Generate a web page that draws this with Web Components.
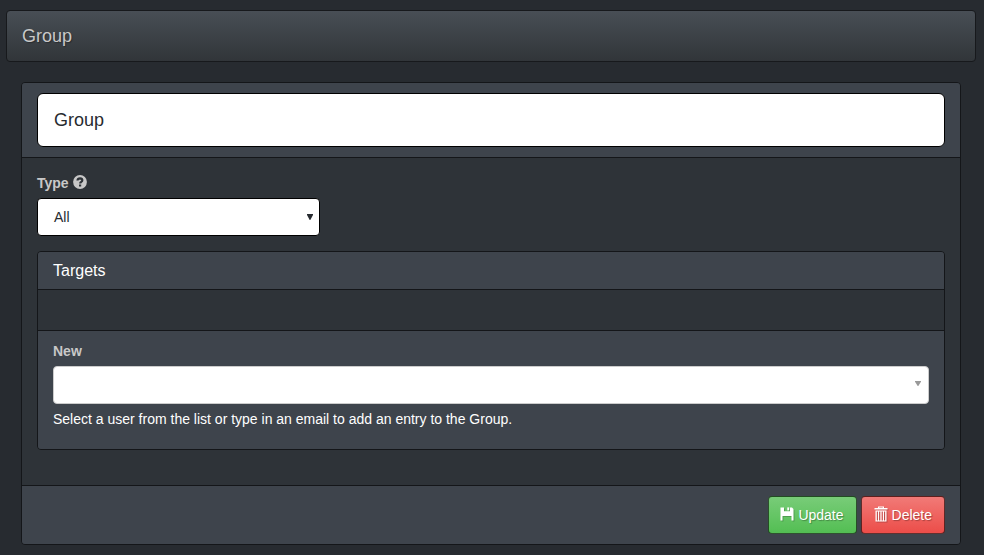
<!DOCTYPE html>
<html lang="en">
<head>
<meta charset="utf-8">
<title>Group</title>
<style>
html, body { margin: 0; height: 100%; }
body { background: #272b30; color: #c8c8c8; font: 14px/20px "Liberation Sans", Arial, sans-serif; overflow: hidden; }
</style>
</head>
<body>
<group-page></group-page>
<script>
const define = (name, html) => {
  const template = document.createElement('template');
  template.innerHTML = html;
  customElements.define(name, class extends HTMLElement {
    constructor() {
      super();
      this.attachShadow({ mode: 'open' }).append(template.content.cloneNode(true));
    }
  });
};

define('title-bar', `
<style>
:host { display: flex; align-items: center; box-sizing: border-box; height: 52px; padding: 0 15px;
  border: 1px solid #17191c; border-radius: 4px;
  background: linear-gradient(#484e55, #3a3f44 60%, #313539);
  font-size: 18px; text-shadow: 1px 1px 1px rgba(0,0,0,.3); }
</style><slot></slot>`);

define('panel-box', `
<style>
:host { display: flex; flex-direction: column; box-sizing: border-box; border: 1px solid #141619;
  border-radius: 4px; background: #2e3338; overflow: hidden; }
header, footer { background: #3e444c; padding: 10px 15px; }
header { border-bottom: 1px solid #141619; }
footer { border-top: 1px solid #141619; }
section { flex: 1; padding: 15px; }
:host([compact]) header { padding: 9px 15px 8px; font-size: 16px; color: #fff; }
:host([compact]) section { padding: 0; }
:host([compact]) footer { height: 98px; }
</style>
<header><slot name="heading"></slot></header>
<section><slot></slot></section>
<footer><slot name="footer"></slot></footer>`);

define('text-field', `
<style>
:host { display: flex; align-items: center; box-sizing: border-box; height: 54px; padding: 0 16px;
  border: 1px solid #000; border-radius: 6px; background: #fff; color: #272b30; font-size: 18px; }
</style><slot></slot>`);

define('field-label', `
<style>
:host { display: flex; align-items: center; gap: 4px; height: 20px; margin-bottom: 5px; font-weight: bold; }
</style><slot></slot>`);

define('select-box', `
<style>
:host { display: flex; align-items: center; justify-content: space-between; box-sizing: border-box;
  height: 38px; padding: 0 6px 1px 16px; border: 1px solid #000; border-radius: 4px;
  background: #fff; color: #272b30; }
:host([searchable]) { border-color: #ccc; padding: 0 7px 4px 12px; }
svg { width: 6px; height: 6px; fill: #272b30; }
:host([searchable]) svg { fill: #999; height: 5px; }
</style><span><slot></slot></span>
<svg viewBox="0 0 6 6" preserveAspectRatio="none"><path d="M0 0H6V1L3.3 6H2.7L0 1Z"/></svg>`);

define('action-button', `
<style>
:host { display: flex; align-items: center; gap: 4px; box-sizing: border-box; height: 38px; padding: 0 12px 1px 11.4px;
  border: 1px solid rgba(0,0,0,.6); border-radius: 4px; color: #fff;
  text-shadow: 1px 1px 1px rgba(0,0,0,.3);
  background: linear-gradient(#78cc78, #62c462 60%, #53be53); }
:host([danger]) { padding-left: 12px; background: linear-gradient(#f17a77, #ee5f5b 60%, #ec4d49); }
</style><slot></slot>`);

const glyphs = {
  'question-icon': `<svg viewBox="0 0 14 14"><circle cx="7" cy="7" r="6.9"/><path d="M4.5 5.5Q4.7 3.4 7.1 3.4 9.3 3.5 9.3 5.2 9.3 6.2 8.2 6.9 7.2 7.4 7.2 8.5" fill="none" stroke="#2e3338" stroke-width="2.2"/><path d="M6 9.4h2.2v2.1H6z" fill="#2e3338"/></svg>`,
  'save-icon': `<svg viewBox="0 0 14 14"><path d="M.5.4H4V4.3H10V.4H12L13.5 1.9V13.5H11.5V9H2.5V13.5H.5Z"/><path d="M7.3.4H9.2V3.4H7.3Z"/></svg>`,
  'trash-icon': `<svg viewBox="0 0 14 16"><path fill-rule="evenodd" d="M4 2V.4H10V2H13.5V3.5H.5V2ZM5.2 2H8.8V1.4H5.2ZM1.5 4.5H12.5V15.6H1.5ZM2.8 5.5V14.4H4V5.5ZM5.1 5.5V14.4H6.4V5.5ZM7.6 5.5V14.4H8.9V5.5ZM10 5.5V14.4H11.2V5.5Z"/></svg>`
};
for (const [name, svg] of Object.entries(glyphs)) define(name, `
<style>
:host { display: block; width: 14px; filter: drop-shadow(1px 1px .5px rgba(0,0,0,.2)); }
svg { display: block; width: 14px; fill: currentColor; }
</style>${svg}`);

define('group-page', `
<style>
:host { display: block; box-sizing: border-box; padding: 10px 8px 0 6px; }
.main { height: 463px; margin: 20px 15px 0; }
.type { width: 283px; margin-bottom: 15px; }
.targets { height: 199px; }
question-icon, save-icon { margin-top: -2px; }
question-icon { filter: none; }
trash-icon { margin-top: -2px; }
.add { display: block; height: 78px; }
.add p { margin: 5px 0 0; color: #fff; }
.actions { display: flex; justify-content: flex-end; gap: 4px; }
</style>
<title-bar>Group</title-bar>
<panel-box class="main">
  <text-field slot="heading">Group</text-field>
  <field-label>Type <question-icon></question-icon></field-label>
  <select-box class="type">All</select-box>
  <panel-box class="targets" compact>
    <span slot="heading">Targets</span>
    <div class="add" slot="footer">
      <field-label>New</field-label>
      <select-box searchable></select-box>
      <p>Select a user from the list or type in an email to add an entry to the Group.</p>
    </div>
  </panel-box>
  <div class="actions" slot="footer">
    <action-button><save-icon></save-icon>Update</action-button>
    <action-button danger><trash-icon></trash-icon>Delete</action-button>
  </div>
</panel-box>`);
</script>
</body>
</html>
